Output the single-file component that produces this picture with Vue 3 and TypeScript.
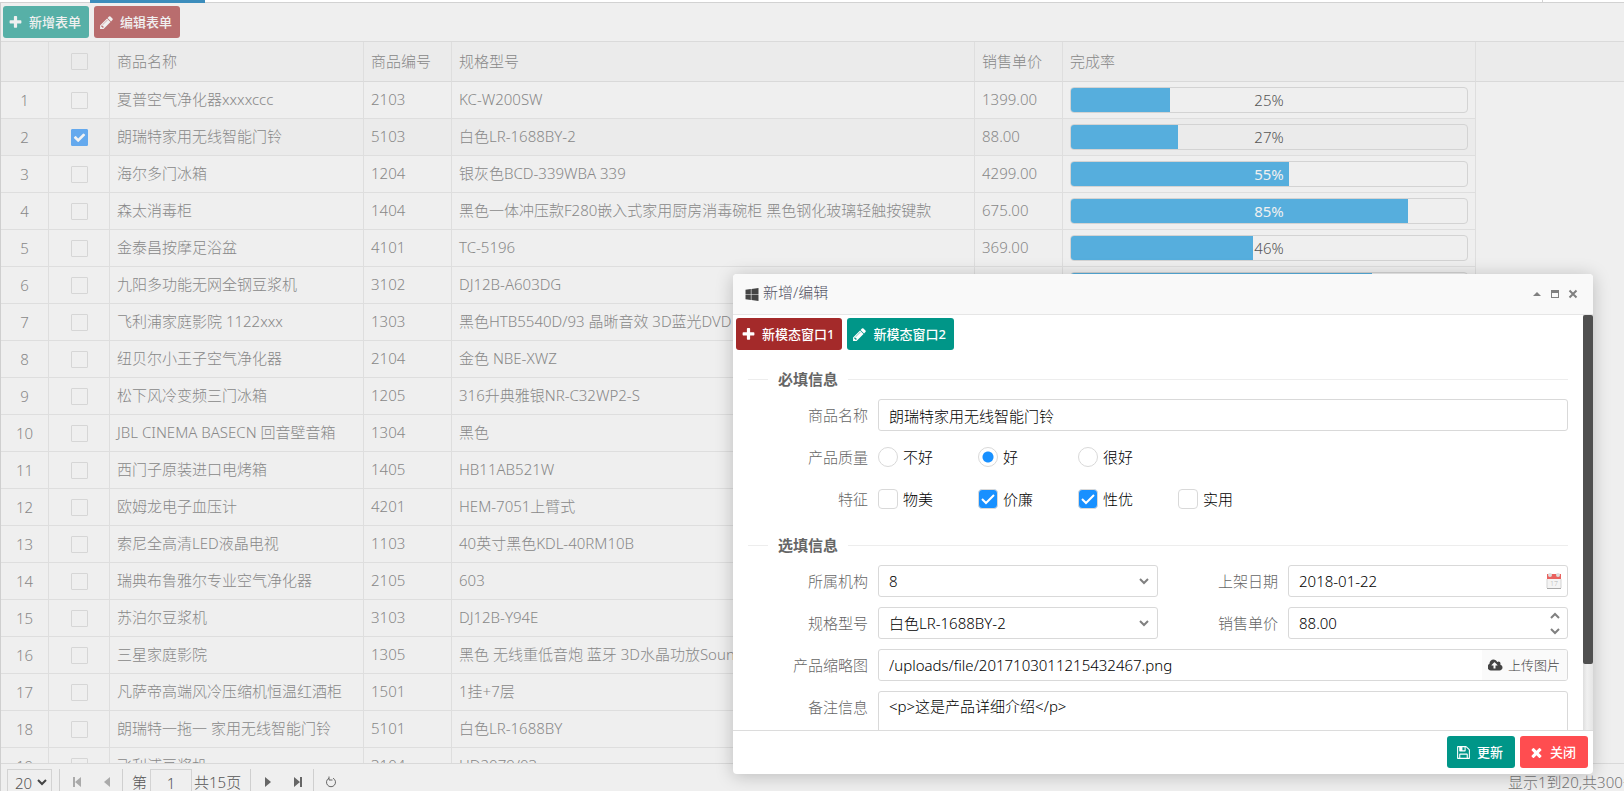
<script setup lang="ts">
import { reactive, ref } from 'vue'

interface Product {
  name: string
  code: string
  spec: string
  price?: string
  rate?: number
}

const products: Product[] = [
  { name: '夏普空气净化器xxxxccc', code: '2103', spec: 'KC-W200SW', price: '1399.00', rate: 25 },
  { name: '朗瑞特家用无线智能门铃', code: '5103', spec: '白色LR-1688BY-2', price: '88.00', rate: 27 },
  { name: '海尔多门冰箱', code: '1204', spec: '银灰色BCD-339WBA 339', price: '4299.00', rate: 55 },
  { name: '森太消毒柜', code: '1404', spec: '黑色一体冲压款F280嵌入式家用厨房消毒碗柜 黑色钢化玻璃轻触按键款', price: '675.00', rate: 85 },
  { name: '金泰昌按摩足浴盆', code: '4101', spec: 'TC-5196', price: '369.00', rate: 46 },
  { name: '九阳多功能无网全钢豆浆机', code: '3102', spec: 'DJ12B-A603DG', rate: 76 },
  { name: '飞利浦家庭影院 1122xxx', code: '1303', spec: '黑色HTB5540D/93 晶晰音效 3D蓝光DVD' },
  { name: '纽贝尔小王子空气净化器', code: '2104', spec: '金色 NBE-XWZ' },
  { name: '松下风冷变频三门冰箱', code: '1205', spec: '316升典雅银NR-C32WP2-S' },
  { name: 'JBL CINEMA BASECN 回音壁音箱', code: '1304', spec: '黑色' },
  { name: '西门子原装进口电烤箱', code: '1405', spec: 'HB11AB521W' },
  { name: '欧姆龙电子血压计', code: '4201', spec: 'HEM-7051上臂式' },
  { name: '索尼全高清LED液晶电视', code: '1103', spec: '40英寸黑色KDL-40RM10B' },
  { name: '瑞典布鲁雅尔专业空气净化器', code: '2105', spec: '603' },
  { name: '苏泊尔豆浆机', code: '3103', spec: 'DJ12B-Y94E' },
  { name: '三星家庭影院', code: '1305', spec: '黑色 无线重低音炮 蓝牙 3D水晶功放Soundbar' },
  { name: '凡萨帝高端风冷压缩机恒温红酒柜', code: '1501', spec: '1挂+7层' },
  { name: '朗瑞特一拖一 家用无线智能门铃', code: '5101', spec: '白色LR-1688BY' },
  { name: '飞利浦豆浆机', code: '3104', spec: 'HD2079/03' },
]

const selected = ref<string[]>(['5103'])
const allChecked = ref(false)
const pageSize = ref('20')
const page = ref('1')

const form = reactive({
  name: '朗瑞特家用无线智能门铃',
  quality: '好',
  features: ['价廉', '性优'],
  org: '8',
  date: '2018-01-22',
  spec: '白色LR-1688BY-2',
  price: '88.00',
  thumb: '/uploads/file/2017103011215432467.png',
  remark: '<p>这是产品详细介绍</p>',
})

const icons = {
  plus: 'M1600 736v192q0 40-28 68t-68 28h-416v416q0 40-28 68t-68 28h-192q-40 0-68-28t-28-68v-416h-416q-40 0-68-28t-28-68v-192q0-40 28-68t68-28h416v-416q0-40 28-68t68-28h192q40 0 68 28t28 68v416h416q40 0 68 28t28 68z',
  pencil: 'M491 1536l91-91-235-235-91 91v107h128v128h107zm523-928q0-22-22-22-10 0-17 7l-542 542q-7 7-7 17 0 22 22 22 10 0 17-7l542-542q7-7 7-17zm-54-192l416 416-832 832h-416v-416zm683 96q0 53-37 90l-166 166-416-416 166-165q36-38 90-38 53 0 91 38l235 234q37 39 37 91z',
  windows: 'M746 1006v651l-682-94v-557h682zm0-743v659h-682v-565zm982 743v786l-907-125v-661h907zm0-878v794h-907v-669z',
  save: 'M512 1536h768v-384h-768v384zm896 0h128v-896q0-14-10-38.5t-20-34.5l-281-281q-10-10-34-20t-39-10v416q0 40-28 68t-68 28h-576q-40 0-68-28t-28-68v-416h-128v1280h128v-416q0-40 28-68t68-28h832q40 0 68 28t28 68v416zm-384-928v-320q0-13-9.500-22.500t-22.500-9.500h-192q-13 0-22.500 9.500t-9.500 22.500v320q0 13 9.500 22.500t22.500 9.500h192q13 0 22.500-9.500t9.500-22.500zm640 32v928q0 40-28 68t-68 28h-1344q-40 0-68-28t-28-68v-1344q0-40 28-68t68-28h928q40 0 88 20t76 48l280 280q28 28 48 76t20 88z',
  times: 'M1490 1322q0 40-28 68l-136 136q-28 28-68 28t-68-28l-294-294-294 294q-28 28-68 28t-68-28l-136-136q-28-28-28-68t28-68l294-294-294-294q-28-28-28-68t28-68l136-136q28-28 68-28t68 28l294 294 294-294q28-28 68-28t68 28l136 136q28 28 28 68t-28 68l-294 294 294 294q28 28 28 68z',
  upload: 'M1216 928q0-14-9-23l-352-352q-9-9-23-9t-23 9l-351 351q-10 12-10 24 0 14 9 23t23 9h224v352q0 13 9.500 22.500t22.500 9.500h192q13 0 22.500-9.500t9.500-22.500v-352h224q13 0 22.500-9.500t9.500-22.500zm640 288q0 159-112.500 271.500t-271.500 112.500h-1088q-185 0-316.500-131.500t-131.500-316.500q0-130 70-240t188-165q-2-30-2-43 0-212 150-362t362-150q156 0 285.500 87t188.500 231q71-62 166-62 106 0 181 75t75 181q0 76-41 138 130 31 213.500 135.500t83.500 238.500z',
  check: 'M1671 566q0 40-28 68l-724 724-136 136q-28 28-68 28t-68-28l-136-136-362-362q-28-28-28-68t28-68l136-136q28-28 68-28t68 28l294 295 656-657q28-28 68-28t68 28l136 136q28 28 28 68z',
}
</script>

<template>
  <div class="page">
    <div class="tabs"><span class="tab-active"></span><span class="tab-end"></span></div>

    <main class="panel">
      <div class="toolbar">
        <button type="button" class="btn dim-teal">
          <svg class="fa" viewBox="0 0 1792 1792"><path :d="icons.plus" /></svg>新增表单
        </button>
        <button type="button" class="btn dim-red">
          <svg class="fa" viewBox="0 0 1792 1792"><path :d="icons.pencil" /></svg>编辑表单
        </button>
      </div>

      <div class="grid-view">
        <table>
          <colgroup>
            <col class="c-num" /><col class="c-check" /><col class="c-name" /><col class="c-code" />
            <col class="c-spec" /><col class="c-price" /><col class="c-rate" /><col />
          </colgroup>
          <thead>
            <tr>
              <th></th>
              <th class="center">
                <span class="tick"><input v-model="allChecked" type="checkbox" aria-label="全选" /></span>
              </th>
              <th>商品名称</th>
              <th>商品编号</th>
              <th>规格型号</th>
              <th>销售单价</th>
              <th>完成率</th>
              <th class="filler"></th>
            </tr>
          </thead>
          <tbody>
            <tr v-for="(p, i) in products" :key="p.code" :class="{ on: selected.includes(p.code) }">
              <td class="num">{{ i + 1 }}</td>
              <td class="center">
                <span class="tick">
                  <input v-model="selected" type="checkbox" :value="p.code" :aria-label="p.name" />
                  <svg v-if="selected.includes(p.code)" viewBox="0 0 1792 1792"><path :d="icons.check" /></svg>
                </span>
              </td>
              <td>{{ p.name }}</td>
              <td>{{ p.code }}</td>
              <td>{{ p.spec }}</td>
              <td>{{ p.price }}</td>
              <td class="rate">
                <div v-if="p.rate" class="bar" :class="{ light: p.rate > 50 }">
                  <div class="fill" :style="{ width: p.rate + '%' }"></div>
                  <span>{{ p.rate }}%</span>
                </div>
              </td>
              <td class="filler"></td>
            </tr>
          </tbody>
        </table>
      </div>

      <nav class="pager" aria-label="分页">
        <span class="size">
          <select v-model="pageSize" aria-label="每页条数"><option>20</option></select>
          <svg viewBox="0 0 10 8"><path d="M1 2l4 4 4-4" /></svg>
        </span>
        <i class="sep"></i>
        <button type="button" class="pg off" aria-label="首页">
          <svg viewBox="0 0 12 12"><path d="M2 1h2v10h-2zM10 1v10l-6-5z" /></svg>
        </button>
        <button type="button" class="pg off" aria-label="上一页">
          <svg viewBox="0 0 12 12"><path d="M9 1v10l-6-5z" /></svg>
        </button>
        <i class="sep"></i>
        <label class="page-no">第<input v-model="page" type="text" /></label>
        <span>共15页</span>
        <i class="sep last"></i>
        <button type="button" class="pg" aria-label="下一页">
          <svg viewBox="0 0 12 12"><path d="M3 1v10l6-5z" /></svg>
        </button>
        <button type="button" class="pg" aria-label="末页">
          <svg viewBox="0 0 12 12"><path d="M2 1v10l6-5zM8 1h2v10h-2z" /></svg>
        </button>
        <i class="sep"></i>
        <button type="button" class="pg" aria-label="刷新">
          <svg viewBox="0 0 12 12"><path class="line" d="M4 2.200A4.500 4.500 0 1 0 8 2.200M4 0.500v3.500h3.500" /></svg>
        </button>
        <span class="total">显示1到20,共300条</span>
      </nav>
    </main>

    <section class="dialog" role="dialog" aria-label="新增/编辑">
      <header>
        <svg class="win" viewBox="0 0 1792 1792"><path :d="icons.windows" /></svg>
        <h1>新增/编辑</h1>
        <button type="button" aria-label="折叠"><svg viewBox="0 0 10 10"><path d="M1 7l4-4 4 4z" /></svg></button>
        <button type="button" aria-label="最大化"><svg viewBox="0 0 10 10"><path fill-rule="evenodd" d="M1 1h8v8h-8zM2 4v4h6v-4z" /></svg></button>
        <button type="button" aria-label="关闭窗口"><svg viewBox="0 0 10 10"><path class="cross" d="M1.500 1.500l7 7M8.500 1.500l-7 7" /></svg></button>
      </header>

      <div class="body">
        <div class="scroll">
          <div class="toolbar">
            <button type="button" class="btn red">
              <svg class="fa" viewBox="0 0 1792 1792"><path :d="icons.plus" /></svg>新模态窗口1
            </button>
            <button type="button" class="btn teal">
              <svg class="fa" viewBox="0 0 1792 1792"><path :d="icons.pencil" /></svg>新模态窗口2
            </button>
          </div>
          <form @submit.prevent>
            <h2>必填信息</h2>
            <div class="field wide">
              <label for="f-name">商品名称</label>
              <input id="f-name" v-model="form.name" class="box" type="text" />
            </div>
            <div class="field wide">
              <span class="cap">产品质量</span>
              <div class="options">
                <label v-for="q in ['不好', '好', '很好']" :key="q">
                  <span class="mark"><input v-model="form.quality" type="radio" name="quality" :value="q" /></span>{{ q }}
                </label>
              </div>
            </div>
            <div class="field wide">
              <span class="cap">特征</span>
              <div class="options">
                <label v-for="f in ['物美', '价廉', '性优', '实用']" :key="f">
                  <span class="mark">
                    <input v-model="form.features" type="checkbox" :value="f" />
                    <svg v-if="form.features.includes(f)" viewBox="0 0 20 20"><path d="M4 10l4 4 8-8" /></svg>
                  </span>{{ f }}
                </label>
              </div>
            </div>

            <h2>选填信息</h2>
            <div class="field">
              <label for="f-org">所属机构</label>
              <div class="box-wrap">
                <select id="f-org" v-model="form.org" class="box"><option>8</option></select>
                <svg class="chev" viewBox="0 0 12 8"><path d="M2 2l4 4 4-4" /></svg>
              </div>
            </div>
            <div class="field">
              <label for="f-date">上架日期</label>
              <div class="box-wrap">
                <input id="f-date" v-model="form.date" class="box" type="text" />
                <svg class="cal" viewBox="0 0 16 18">
                  <rect x="1" y="2" width="14" height="15" fill="#f4f4f4" />
                  <rect x="1" y="2" width="14" height="5" fill="#e9625f" />
                  <rect x="1" y="16" width="14" height="1" fill="#a8a8a8" />
                  <path d="M1 7v9M15 7v9" stroke="#d4d4d4" />
                  <circle cx="4" cy="3" r="2" fill="#dedede" /><circle cx="12" cy="3" r="2" fill="#dedede" />
                  <text x="4" y="14" font-size="7" fill="#b4b4b4">17</text>
                </svg>
              </div>
            </div>
            <div class="field">
              <label for="f-spec">规格型号</label>
              <div class="box-wrap">
                <select id="f-spec" v-model="form.spec" class="box"><option>白色LR-1688BY-2</option></select>
                <svg class="chev" viewBox="0 0 12 8"><path d="M2 2l4 4 4-4" /></svg>
              </div>
            </div>
            <div class="field">
              <label for="f-price">销售单价</label>
              <div class="box-wrap">
                <input id="f-price" v-model="form.price" class="box" type="text" />
                <span class="spin">
                  <button type="button" aria-label="增加"><svg viewBox="0 0 12 8"><path d="M2 6l4-4 4 4" /></svg></button>
                  <button type="button" aria-label="减少"><svg viewBox="0 0 12 8"><path d="M2 2l4 4 4-4" /></svg></button>
                </span>
              </div>
            </div>
            <div class="field wide">
              <label for="f-thumb">产品缩略图</label>
              <div class="box with-btn">
                <input id="f-thumb" v-model="form.thumb" type="text" />
                <button type="button">
                  <svg viewBox="0 0 1920 1792"><path :d="icons.upload" /></svg>上传图片
                </button>
              </div>
            </div>
            <div class="field wide area">
              <label for="f-remark">备注信息</label>
              <textarea id="f-remark" v-model="form.remark" class="box"></textarea>
            </div>
          </form>
        </div>
        <div class="track"><div class="thumb"></div></div>
      </div>

      <footer>
        <button type="button" class="btn teal">
          <svg class="fa" viewBox="0 0 1792 1792"><path :d="icons.save" /></svg>更新
        </button>
        <button type="button" class="btn close">
          <svg class="fa" viewBox="0 0 1792 1792"><path :d="icons.times" /></svg>关闭
        </button>
      </footer>
    </section>
  </div>
</template>

<style>
body {
  overflow: hidden;
}
</style>

<style scoped>
.page,
.page * {
  box-sizing: border-box;
}
.page {
  position: relative;
  display: flex;
  flex-direction: column;
  height: 100vh;
  overflow: hidden;
  background: #efefef;
  color: #888;
  font: 300 15px/20px 'Noto Sans', 'Noto Sans CJK SC', sans-serif;
}
button,
input,
select,
textarea {
  margin: 0;
  padding: 0;
  border: 0;
  background: none;
  color: inherit;
  font: inherit;
}
svg {
  flex: none;
  fill: currentColor;
}
.tabs {
  display: flex;
  justify-content: space-between;
  flex: none;
  height: 3px;
  padding: 0 81px 0 90px;
  background: linear-gradient(#fff 2px, #d2d2d2 2px);
}
.tab-active {
  width: 115px;
  background: #3c8dbc;
}
.tab-end {
  width: 1px;
  background: #d2d2d2;
}
.panel {
  display: flex;
  flex: 1;
  flex-direction: column;
  min-height: 0;
  border-left: 1px solid #cfcfcf;
}
.toolbar {
  display: flex;
  flex: none;
  gap: 5px;
  padding: 3px 2px;
}
.btn {
  display: flex;
  align-items: center;
  gap: 6px;
  height: 32px;
  padding: 0 8px 0 5px;
  border-radius: 3px;
  color: #fff;
  font-size: 13px;
  font-weight: 500;
  white-space: nowrap;
}
.fa {
  width: 15px;
  height: 15px;
}
.dim-teal {
  background: #57b0a7;
  color: #f0f0f0;
}
.dim-red {
  background: #b96d6e;
  color: #f0f0f0;
}
.red {
  background: #a42a2a;
}
.teal {
  background: #009688;
}
.close {
  background: #ff4d50;
}

.grid-view {
  flex: 1;
  min-height: 0;
  overflow: hidden;
  border-top: 1px solid #dadada;
}
table {
  width: 100%;
  border-spacing: 0;
  table-layout: fixed;
}
.c-num {
  width: 48px;
}
.c-check {
  width: 61px;
}
.c-name {
  width: 254px;
}
.c-code,
.c-price {
  width: 88px;
}
.c-spec {
  width: 523px;
}
.c-rate {
  width: 413px;
}
th,
td {
  height: 37px;
  padding: 0 7px 2px;
  overflow: hidden;
  border-right: 1px solid #dedede;
  border-bottom: 1px solid #dedede;
  font-weight: inherit;
  text-align: left;
  white-space: nowrap;
}
th {
  height: 40px;
  border-bottom-color: #d9d9d9;
  background: #ebebeb;
}
.on td {
  background: #ebebeb;
}
th.filler {
  border-right: 0;
}
td.filler,
.on td.filler {
  border: 0;
  background: none;
}
.center,
.num,
.rate {
  padding-bottom: 0;
}
.num {
  text-align: center;
}
.tick {
  display: block;
  position: relative;
  width: 17px;
  height: 17px;
  margin: 0 auto;
}
.tick input {
  display: block;
  width: 17px;
  height: 17px;
  appearance: none;
  border: 1px solid #d6d6d6;
  border-radius: 1px;
}
.tick input:checked {
  border-color: #64a9ee;
  background: #64a9ee;
}
.tick svg {
  position: absolute;
  inset: 2px;
  color: #f2f2f2;
  pointer-events: none;
}
.bar {
  position: relative;
  height: 26px;
  overflow: hidden;
  border: 1px solid #d3d3d3;
  border-radius: 4px;
  color: #555;
  line-height: 24px;
  text-align: center;
}
.bar.light {
  color: #f0f0f0;
  font-weight: 400;
}
.fill {
  position: absolute;
  inset: 0 auto 0 0;
  background: #56aedd;
}
.bar span {
  position: relative;
}

.pager {
  display: flex;
  align-items: flex-start;
  flex: none;
  height: 28px;
  padding-top: 5px;
  overflow: hidden;
  border-top: 1px solid #d9d9d9;
  color: #555;
  line-height: 26px;
  white-space: nowrap;
}
.pager > * {
  flex: none;
}
.size {
  position: relative;
  width: 45px;
  height: 28px;
  margin: 0 7px 0 6px;
}
.size select {
  width: 100%;
  height: 100%;
  padding-left: 7px;
  appearance: none;
  border: 1px solid #d3d3d3;
}
.size svg {
  position: absolute;
  top: 9px;
  right: 5px;
  width: 10px;
  height: 8px;
  fill: none;
  stroke: #444;
  stroke-width: 2;
  pointer-events: none;
}
.sep {
  width: 1px;
  height: 26px;
  margin-right: 2px;
  background: #cfcfcf;
}
.pg {
  display: grid;
  place-items: center;
  width: 30px;
  height: 26px;
  color: #666;
}
.off {
  color: #aaa;
}
.pg svg {
  width: 12px;
  height: 12px;
}
.line {
  fill: none;
  stroke: currentColor;
}
.page-no {
  display: flex;
  gap: 3px;
  padding: 0 2px 0 7px;
}
.page-no input {
  width: 42px;
  height: 28px;
  border: 1px solid #d3d3d3;
  text-align: center;
}
.sep.last {
  margin-left: 9px;
}
.pager .total {
  width: 116px;
  margin-left: auto;
  overflow: hidden;
  color: #777;
}

.dialog {
  position: absolute;
  right: 31px;
  bottom: 17px;
  display: flex;
  flex-direction: column;
  width: 860px;
  height: 500px;
  overflow: hidden;
  border-radius: 4px;
  background: #fff;
  box-shadow: 0 2px 18px rgba(0, 0, 0, 0.22);
}
.dialog header {
  display: flex;
  align-items: center;
  flex: none;
  height: 41px;
  padding: 0 11px 0 12px;
  border-bottom: 1px solid #e6e6e6;
  background: #f9f9f9;
}
.win {
  width: 14px;
  height: 14px;
  color: #444;
}
h1 {
  flex: 1;
  margin: 0 0 4px 4px;
  color: #556;
  font-size: 15px;
  font-weight: inherit;
}
.dialog header button {
  display: grid;
  place-items: center;
  width: 18px;
  height: 18px;
  color: #808080;
}
.dialog header button svg {
  width: 10px;
  height: 10px;
}
.cross {
  stroke: currentColor;
  stroke-width: 2;
}
.body {
  display: flex;
  flex: 1;
  min-height: 0;
}
.scroll {
  flex: 1;
  min-width: 0;
  overflow: hidden;
}
.scroll .toolbar {
  padding: 3px;
}
form {
  display: grid;
  grid-template-columns: 1fr 1fr;
  row-gap: 10px;
  padding: 16px 15px 0;
}
h2 {
  display: grid;
  grid-column: 1 / -1;
  grid-template-columns: 20px auto 1fr;
  align-items: center;
  gap: 10px;
  margin: 0;
  color: #666;
  font-size: 15px;
  font-weight: 700;
}
h2:not(:first-child) {
  padding-top: 10px;
}
h2::before,
h2::after {
  height: 1px;
  background: #ededed;
  content: '';
}
.field {
  display: grid;
  grid-template-columns: 120px 1fr;
  gap: 10px;
  align-items: center;
  min-height: 32px;
  color: #666;
}
.wide {
  grid-column: 1 / -1;
}
.field > label,
.cap {
  text-align: right;
}
.box {
  display: block;
  width: 100%;
  height: 32px;
  padding: 0 10px;
  appearance: none;
  border: 1px solid #d9d9d9;
  border-radius: 3px;
  background: #fff;
  color: #000;
}
.box-wrap {
  position: relative;
}
.chev,
.spin svg {
  width: 12px;
  height: 8px;
  fill: none;
  stroke: #808080;
  stroke-width: 2;
}
.chev {
  position: absolute;
  top: 12px;
  right: 8px;
  pointer-events: none;
}
.cal {
  position: absolute;
  top: 7px;
  right: 6px;
  width: 16px;
  height: 18px;
}
.spin {
  position: absolute;
  inset: 1px 6px 1px auto;
  display: grid;
  width: 14px;
}
.spin button {
  display: grid;
  place-items: center;
}
.with-btn {
  display: flex;
  padding-right: 0;
  overflow: hidden;
}
.with-btn input {
  flex: 1;
  min-width: 0;
}
.with-btn button {
  display: flex;
  align-items: center;
  gap: 5px;
  padding: 0 7px 0 6px;
  background: #fafafa;
  color: #444;
  font-size: 13px;
}
.with-btn svg {
  width: 15px;
  height: 14px;
}
.area {
  align-items: start;
}
.area label {
  line-height: 32px;
}
textarea.box {
  height: 90px;
  padding: 4px 10px;
  resize: none;
}
.options {
  display: grid;
  grid-template-columns: repeat(auto-fill, 100px);
  color: #000;
}
.options label {
  display: flex;
  align-items: center;
  gap: 5px;
}
.mark {
  position: relative;
  width: 20px;
  height: 20px;
}
.mark input {
  display: block;
  width: 20px;
  height: 20px;
  appearance: none;
  border: 1px solid #d9d9d9;
  border-radius: 4px;
}
.mark input:checked {
  background: #1890ff;
}
.mark input[type='radio'] {
  border-radius: 50%;
}
.mark input[type='radio']:checked {
  background: radial-gradient(circle, #1890ff 5px, #fff 6px);
}
.mark svg {
  position: absolute;
  inset: 0;
  fill: none;
  stroke: #fff;
  stroke-width: 2;
  pointer-events: none;
}
.track {
  width: 10px;
  background: linear-gradient(90deg, #dedede, #f0f0f0 40%, #e6e6e6);
}
.thumb {
  height: 84%;
  border-radius: 2px;
  background: #505050;
}
.dialog footer {
  display: flex;
  justify-content: flex-end;
  gap: 5px;
  flex: none;
  height: 44px;
  padding: 5px;
  border-top: 1px solid #dcdcdc;
}
footer .btn {
  padding: 0 12px 0 9px;
}
</style>
